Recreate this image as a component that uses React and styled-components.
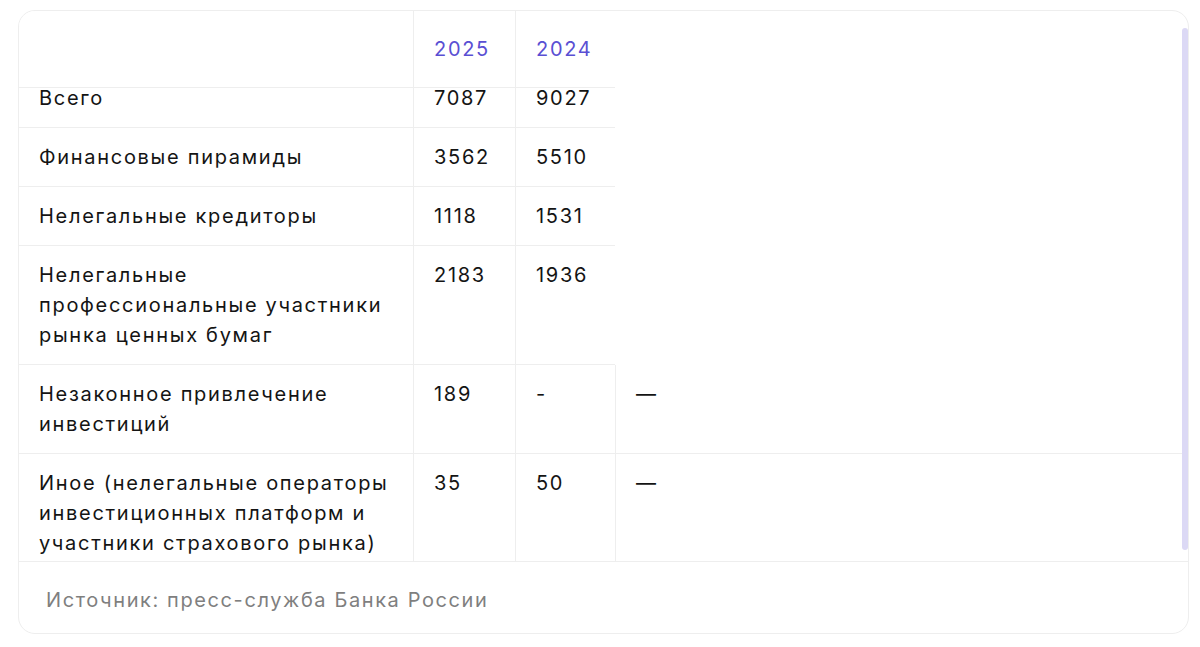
import React, { useLayoutEffect, useRef } from 'react';
import styled, { createGlobalStyle } from 'styled-components';

const GlobalStyle = createGlobalStyle`
    * { box-sizing: border-box; }
    body {
        margin: 0;
        background: #ffffff;
        font-family: Inter, 'Noto Sans', sans-serif;
        color: #141414;
    }
`;

const rows = [
    ['Всего', '7087', '9027'],
    ['Финансовые пирамиды', '3562', '5510'],
    ['Нелегальные кредиторы', '1118', '1531'],
    ['Нелегальные профессиональные участники рынка ценных бумаг', '2183', '1936'],
    ['Незаконное привлечение инвестиций', '189', '-', '—'],
    ['Иное (нелегальные операторы инвестиционных платформ и участники страхового рынка)', '35', '50', '—'],
];

const App = () => {
    const scrollRef = useRef(null);

    // таблица в исходнике прокручена чуть вниз
    useLayoutEffect(() => {
        const el = scrollRef.current;
        if (!el) return;
        el.scrollTop = 19;
        if (document.fonts) {
            document.fonts.ready.then(() => {
                el.scrollTop = 19;
            });
        }
    }, []);

    return (
        <Page>
            <GlobalStyle />
            <Card>
                <ScrollArea ref={scrollRef}>
                    <Table>
                        <colgroup>
                            <Col $w={394} />
                            <Col $w={102} />
                            <Col $w={100} />
                            <col />
                        </colgroup>
                        <thead>
                            <tr>
                                <HeadCell />
                                <HeadCell>2025</HeadCell>
                                <HeadCell>2024</HeadCell>
                            </tr>
                        </thead>
                        <tbody>
                            {rows.map((row) => (
                                <tr key={row[0]}>
                                    {row.map((value, i) => (
                                        <Cell key={i}>{value}</Cell>
                                    ))}
                                </tr>
                            ))}
                        </tbody>
                    </Table>
                </ScrollArea>
                <ScrollThumb />
                <Source>Источник: пресс-служба Банка России</Source>
            </Card>
        </Page>
    );
};

const Page = styled.div`
    padding: 10px 11px 0 18px;
`;

const Card = styled.section`
    position: relative;
    display: flex;
    flex-direction: column;
    height: 624px;
    border: 1px solid #eeeeee;
    border-radius: 17px;
    overflow: hidden;
    background: #ffffff;
`;

const ScrollArea = styled.div`
    height: 550px;
    flex-shrink: 0;
    padding-right: 6px;
    overflow-y: auto;
    scrollbar-width: none;

    &::-webkit-scrollbar {
        display: none;
    }
`;

// ползунок прокрутки поверх таблицы
const ScrollThumb = styled.div`
    position: absolute;
    top: 17px;
    right: 0;
    width: 6px;
    height: 522px;
    border-radius: 3px;
    background: #dcd9f5;
`;

const Table = styled.table`
    width: 100%;
    table-layout: fixed;
    border-collapse: separate;
    border-spacing: 0;
`;

const Col = styled.col`
    width: ${(p) => p.$w}px;
`;

const HeadCell = styled.th`
    position: sticky;
    top: 0;
    z-index: 1;
    background: #ffffff;
    padding: 23px 20px;
    text-align: left;
    font-weight: 400;
    font-size: 20px;
    line-height: 30px;
    letter-spacing: 1.7px;
    color: #5a4fd3;
    border-bottom: 1px solid #eeeeee;

    & + & {
        border-left: 1px solid #eeeeee;
    }
`;

const Cell = styled.td`
    padding: 14px 20px;
    vertical-align: top;
    font-size: 20px;
    line-height: 30px;
    letter-spacing: 1.7px;
    color: #141414;
    border-bottom: 1px solid #eeeeee;

    & + & {
        border-left: 1px solid #eeeeee;
    }
`;

const Source = styled.footer`
    flex: 1;
    padding: 23px 27px 18px;
    border-top: 1px solid #eeeeee;
    font-size: 20px;
    line-height: 30px;
    letter-spacing: 1.6px;
    color: #7f7f7f;
`;

export default App;
